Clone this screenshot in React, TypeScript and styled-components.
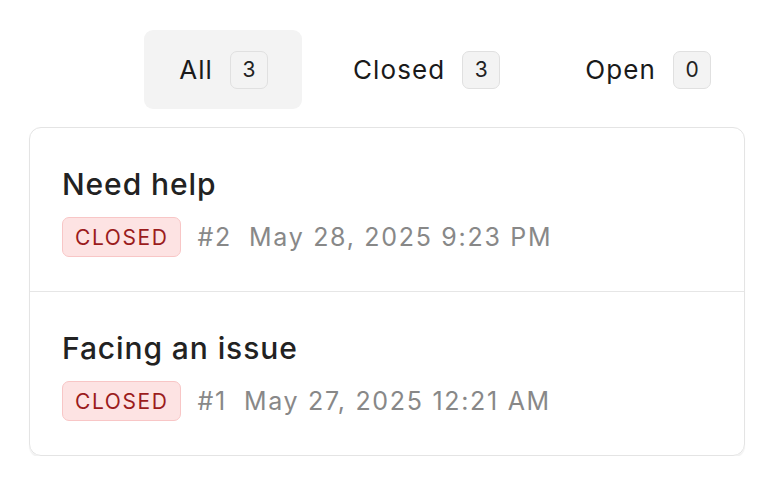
import React from "react";
import styled, { createGlobalStyle } from "styled-components";

const Global = createGlobalStyle`
  html, body { margin: 0; padding: 0; background: #ffffff; }
  body { font-family: Inter, "Noto Sans", sans-serif; color: #222222; }
`;

const Page = styled.div`
  padding: 30px 27px 0 29px;
  display: flex;
  flex-direction: column;
  gap: 18px;
`;

const Tabs = styled.div`
  display: flex;
  justify-content: flex-end;
  gap: 16px;
`;

const Tab = styled.button<{ $active?: boolean }>`
  display: flex;
  align-items: center;
  gap: 17px;
  height: 79px;
  padding: 0 34px 0 35px;
  border: none;
  border-radius: 9px;
  background: ${(p) => (p.$active ? "#f3f3f3" : "transparent")};
  font-family: Inter, sans-serif;
  font-size: 26px;
  font-weight: 400;
  letter-spacing: 1.1px;
  color: #1a1a1a;
  cursor: pointer;
`;

const Count = styled.span`
  display: inline-flex;
  align-items: center;
  justify-content: center;
  box-sizing: border-box;
  width: 38px;
  height: 38px;
  border: 1.5px solid #e0e0e0;
  border-radius: 7px;
  background: #f3f3f3;
  font-size: 21px;
  font-weight: 400;
  letter-spacing: 0;
  color: #222222;
`;

const Card = styled.div`
  border: 1px solid #e4e4e4;
  border-radius: 12px;
  box-shadow: 0 2px 1px rgba(0, 0, 0, 0.06);
  overflow: hidden;
`;

const Row = styled.div`
  padding: 34px 32px;
  display: flex;
  flex-direction: column;
  gap: 11px;
  & + & { border-top: 1px solid #e6e6e6; }
`;

const Title = styled.div`
  font-size: 30px;
  font-weight: 450;
  letter-spacing: 0.9px;
  line-height: 44px;
  color: #222222;
`;

const Meta = styled.div`
  display: flex;
  align-items: center;
  gap: 17px;
  font-size: 25px;
  letter-spacing: 1.7px;
  color: #888888;
`;

const Status = styled.span`
  display: inline-flex;
  align-items: center;
  box-sizing: border-box;
  height: 40px;
  padding: 0 11px 0 12px;
  border: 1.5px solid #f8c6c6;
  border-radius: 7px;
  background: #fde3e3;
  color: #9b1c1c;
  font-size: 21px;
  letter-spacing: 1.6px;
`;

const Number = styled.span``;

const tabs = [
  { label: "All", count: 3, active: true },
  { label: "Closed", count: 3 },
  { label: "Open", count: 0 },
];

const tickets = [
  { title: "Need help", id: 2, date: "May 28, 2025 9:23 PM" },
  { title: "Facing an issue", id: 1, date: "May 27, 2025 12:21 AM" },
];

export default function App() {
  return (
    <>
      <Global />
      <Page>
        <Tabs>
          {tabs.map((t) => (
            <Tab key={t.label} $active={t.active}>
              {t.label}
              <Count>{t.count}</Count>
            </Tab>
          ))}
        </Tabs>
        <Card>
          {tickets.map((t) => (
            <Row key={t.id}>
              <Title>{t.title}</Title>
              <Meta>
                <Status>CLOSED</Status>
                <Number>#{t.id}</Number>
                <span>{t.date}</span>
              </Meta>
            </Row>
          ))}
        </Card>
      </Page>
    </>
  );
}
